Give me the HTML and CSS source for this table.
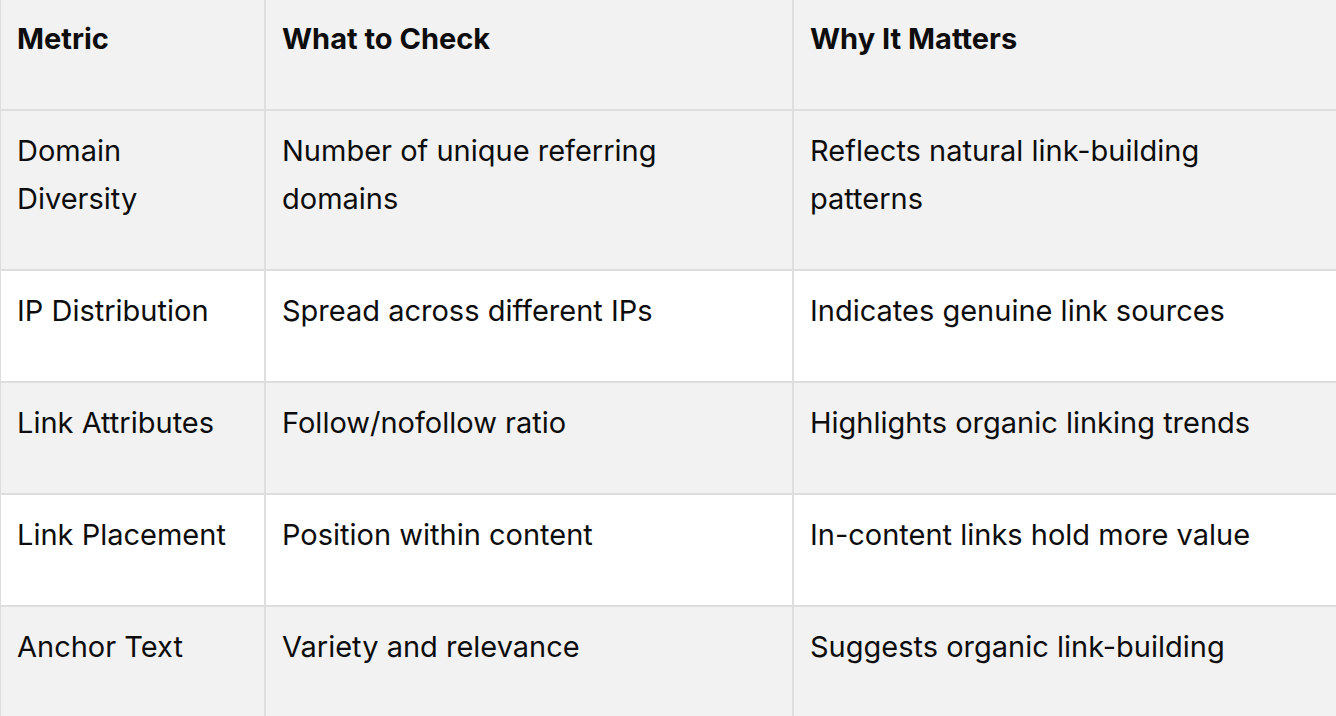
FILE: index.html
```html
<!DOCTYPE html>
<html lang="en">
<head>
<meta charset="utf-8">
<title>Backlink metrics</title>
<link rel="stylesheet" href="styles.css">
</head>
<body>
<table class="metrics">
  <thead>
    <tr>
      <th class="col-metric">Metric</th>
      <th class="col-check">What to Check</th>
      <th class="col-why">Why It Matters</th>
    </tr>
  </thead>
  <tbody>
    <tr>
      <td>Domain Diversity</td>
      <td>Number of unique referring domains</td>
      <td>Reflects natural link-building patterns</td>
    </tr>
    <tr>
      <td>IP Distribution</td>
      <td>Spread across different IPs</td>
      <td>Indicates genuine link sources</td>
    </tr>
    <tr>
      <td>Link Attributes</td>
      <td>Follow/nofollow ratio</td>
      <td>Highlights organic linking trends</td>
    </tr>
    <tr>
      <td>Link Placement</td>
      <td>Position within content</td>
      <td>In-content links hold more value</td>
    </tr>
    <tr>
      <td>Anchor Text</td>
      <td>Variety and relevance</td>
      <td>Suggests organic link-building</td>
    </tr>
  </tbody>
</table>
</body>
</html>
```

FILE: styles.css
```css
html, body {
  margin: 0;
  padding: 0;
  background: #ffffff;
}
body {
  font-family: Inter, "Noto Sans", "Liberation Sans", sans-serif;
  color: #0d0d0d;
  overflow: hidden;
}
.metrics {
  border-collapse: separate;
  border-spacing: 0;
  table-layout: fixed;
  width: 1338px;
  font-size: 29px;
  line-height: 48px;
}
.metrics th,
.metrics td {
  box-sizing: border-box;
  border: 0 solid #dedede;
  border-right-width: 2px;
  border-bottom-width: 2px;
  padding: 16px 16px 46px 16px;
  text-align: left;
  vertical-align: top;
}
.metrics th {
  font-weight: 700;
  padding-top: 15px;
}
.metrics th:first-child,
.metrics td:first-child {
  border-left-width: 1px;
}
.col-metric { width: 266px; }
.col-check { width: 528px; }
.col-why { width: 544px; }
.metrics thead tr,
.metrics tbody tr:nth-child(odd) {
  background: #f2f2f2;
}
.metrics tbody tr:nth-child(even) {
  background: #ffffff;
}
```
